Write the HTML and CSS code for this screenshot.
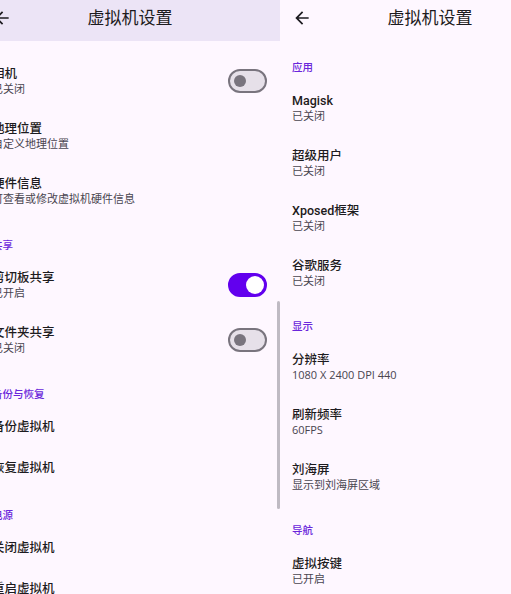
FILE: index.html
```html
<!DOCTYPE html>
<html lang="zh-CN">
<head>
<meta charset="utf-8">
<title>虚拟机设置</title>
<link rel="stylesheet" href="styles.css">
</head>
<body>
<div class="screen">
  <section class="panel panel-left">
    <header class="appbar appbar-tinted">
      <svg class="back" viewBox="0 0 24 24" width="20" height="20"><path d="M20 11H7.83l5.59-5.59L12 4l-8 8 8 8 1.41-1.41L7.83 13H20v-2z"/></svg>
      <h1 class="appbar-title">虚拟机设置</h1>
      <span class="appbar-spacer"></span>
    </header>
    <div class="list list-scrolled">
      <div class="item">
        <div class="item-text"><span class="item-title">相机</span><span class="item-sub">已关闭</span></div>
        <span class="switch"><span class="thumb"></span></span>
      </div>
      <div class="item">
        <div class="item-text"><span class="item-title">地理位置</span><span class="item-sub">自定义地理位置</span></div>
      </div>
      <div class="item">
        <div class="item-text"><span class="item-title">硬件信息</span><span class="item-sub">可查看或修改虚拟机硬件信息</span></div>
      </div>
      <div class="section">共享</div>
      <div class="item">
        <div class="item-text"><span class="item-title">剪切板共享</span><span class="item-sub">已开启</span></div>
        <span class="switch switch-on"><span class="thumb"></span></span>
      </div>
      <div class="item">
        <div class="item-text"><span class="item-title">文件夹共享</span><span class="item-sub">已关闭</span></div>
        <span class="switch"><span class="thumb"></span></span>
      </div>
      <div class="section">备份与恢复</div>
      <div class="item">
        <div class="item-text"><span class="item-title">备份虚拟机</span></div>
      </div>
      <div class="item">
        <div class="item-text"><span class="item-title">恢复虚拟机</span></div>
      </div>
      <div class="section">电源</div>
      <div class="item">
        <div class="item-text"><span class="item-title">关闭虚拟机</span></div>
      </div>
      <div class="item">
        <div class="item-text"><span class="item-title">重启虚拟机</span></div>
      </div>
    </div>
    <div class="scrollbar"></div>
  </section>

  <section class="panel">
    <header class="appbar">
      <svg class="back" viewBox="0 0 24 24" width="20" height="20"><path d="M20 11H7.83l5.59-5.59L12 4l-8 8 8 8 1.41-1.41L7.83 13H20v-2z"/></svg>
      <h1 class="appbar-title">虚拟机设置</h1>
      <span class="appbar-spacer"></span>
    </header>
    <div class="list">
      <div class="section">应用</div>
      <div class="item">
        <div class="item-text"><span class="item-title">Magisk</span><span class="item-sub">已关闭</span></div>
      </div>
      <div class="item">
        <div class="item-text"><span class="item-title">超级用户</span><span class="item-sub">已关闭</span></div>
      </div>
      <div class="item">
        <div class="item-text"><span class="item-title">Xposed框架</span><span class="item-sub">已关闭</span></div>
      </div>
      <div class="item">
        <div class="item-text"><span class="item-title">谷歌服务</span><span class="item-sub">已关闭</span></div>
      </div>
      <div class="section">显示</div>
      <div class="item">
        <div class="item-text"><span class="item-title">分辨率</span><span class="item-sub">1080 X 2400 DPI 440</span></div>
      </div>
      <div class="item">
        <div class="item-text"><span class="item-title">刷新频率</span><span class="item-sub">60FPS</span></div>
      </div>
      <div class="item">
        <div class="item-text"><span class="item-title">刘海屏</span><span class="item-sub">显示到刘海屏区域</span></div>
      </div>
      <div class="section">导航</div>
      <div class="item">
        <div class="item-text"><span class="item-title">虚拟按键</span><span class="item-sub">已开启</span></div>
      </div>
    </div>
  </section>
</div>
</body>
</html>
```

FILE: styles.css
```css
* { box-sizing: border-box; }

html, body {
  margin: 0;
  padding: 0;
  background: #FEF7FF;
}

body {
  font-family: "Open Sans", "Noto Sans CJK SC", sans-serif;
  color: #1D1B20;
}

.screen {
  display: flex;
  width: 511px;
  height: 594px;
  overflow: hidden;
}

.panel {
  position: relative;
  flex: 0 0 300px;
  width: 300px;
  height: 594px;
  overflow: hidden;
  background: #FEF7FF;
}

.panel-left {
  margin-left: -20px;
}

.appbar {
  display: flex;
  align-items: center;
  height: 41px;
  padding: 0 12px 6px 12px;
  background: #FEF7FF;
}

.appbar-tinted {
  background: #ECE4F6;
}

.back {
  flex: 0 0 20px;
  fill: #1D1B20;
}

.appbar-title {
  flex: 1;
  margin: 0;
  text-align: center;
  font-size: 17px;
  font-weight: 400;
  line-height: 22px;
  color: #1D1B20;
}

.appbar-spacer {
  flex: 0 0 20px;
}

.list {
  display: flex;
  flex-direction: column;
}

.list-scrolled {
  padding-top: 12.5px;
}

.section {
  padding: 19px 12px 6px 12px;
  font-size: 10.5px;
  line-height: 14px;
  font-weight: 500;
  color: #6A26DB;
}

.item {
  display: flex;
  align-items: center;
  padding: 12.5px 13px 12.5px 12px;
}

.item-text {
  flex: 1;
  display: flex;
  flex-direction: column;
  min-width: 0;
}

.item-title {
  font-family: "Roboto", "Noto Sans CJK SC", sans-serif;
  font-size: 12.5px;
  line-height: 16px;
  font-weight: 500;
  color: #1D1B20;
  white-space: nowrap;
}

.item-sub {
  font-size: 11px;
  line-height: 14px;
  color: #49454F;
  white-space: nowrap;
}

.switch {
  display: flex;
  align-items: center;
  justify-content: flex-start;
  width: 39px;
  height: 24px;
  padding-left: 4px;
  border: 2px solid #79747E;
  border-radius: 12px;
  background: #E6E0E9;
}

.switch .thumb {
  display: block;
  width: 12px;
  height: 12px;
  border-radius: 50%;
  background: #79747E;
}

.switch-on {
  justify-content: flex-end;
  padding-left: 0;
  padding-right: 1px;
  border-color: #6200EE;
  background: #6200EE;
}

.switch-on .thumb {
  width: 18px;
  height: 18px;
  background: #FFFFFF;
}

.scrollbar {
  position: absolute;
  top: 301px;
  right: 0.5px;
  width: 3px;
  height: 208px;
  border-radius: 2px;
  background: #BFBAC3;
}
```
